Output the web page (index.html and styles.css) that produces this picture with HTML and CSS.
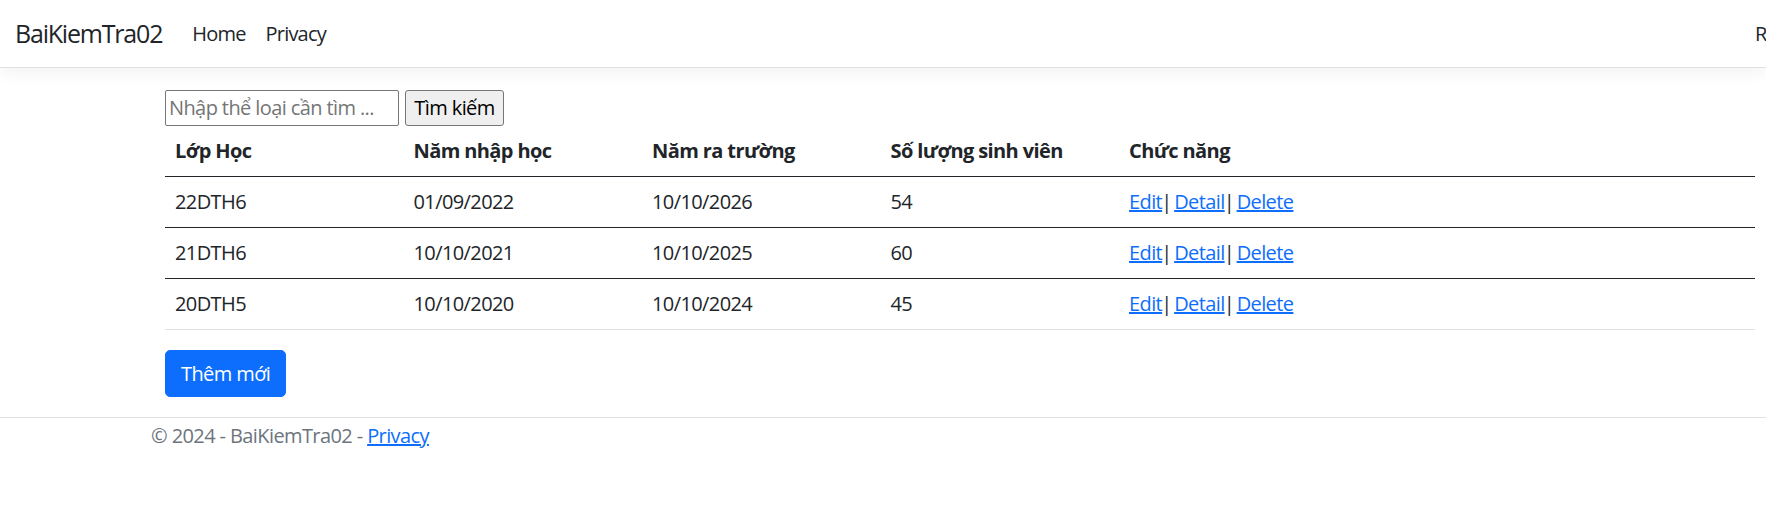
FILE: index.html
```html
<!DOCTYPE html>
<html lang="vi">
<head>
<meta charset="utf-8">
<title>BaiKiemTra02</title>
<link rel="stylesheet" href="styles.css">
</head>
<body>
<header class="navbar">
  <a class="brand" href="#">BaiKiemTra02</a>
  <ul class="nav">
    <li><a class="nav-link" href="#">Home</a></li>
    <li><a class="nav-link" href="#">Privacy</a></li>
  </ul>
  <ul class="nav nav-right">
    <li><a class="nav-link" href="#">Register</a></li>
  </ul>
</header>
<main class="main">
  <form class="search">
    <input class="search-input" type="text" placeholder="Nhập thể loại cần tìm ...">
    <button class="search-btn" type="button">Tìm kiếm</button>
  </form>
  <table class="table">
    <thead>
      <tr>
        <th class="col">Lớp Học</th>
        <th class="col">Năm nhập học</th>
        <th class="col">Năm ra trường</th>
        <th class="col">Số lượng sinh viên</th>
        <th>Chức năng</th>
      </tr>
    </thead>
    <tbody>
      <tr class="dark">
        <td>22DTH6</td><td>01/09/2022</td><td>10/10/2026</td><td>54</td>
        <td><a href="#">Edit</a><span class="sep">|</span> <a href="#">Detail</a><span class="sep">|</span> <a href="#">Delete</a></td>
      </tr>
      <tr class="dark">
        <td>21DTH6</td><td>10/10/2021</td><td>10/10/2025</td><td>60</td>
        <td><a href="#">Edit</a><span class="sep">|</span> <a href="#">Detail</a><span class="sep">|</span> <a href="#">Delete</a></td>
      </tr>
      <tr>
        <td>20DTH5</td><td>10/10/2020</td><td>10/10/2024</td><td>45</td>
        <td><a href="#">Edit</a><span class="sep">|</span> <a href="#">Detail</a><span class="sep">|</span> <a href="#">Delete</a></td>
      </tr>
    </tbody>
  </table>
  <a class="btn-primary" href="#">Thêm mới</a>
</main>
<footer class="footer">
  &copy; 2024 - BaiKiemTra02 - <a href="#">Privacy</a>
</footer>
</body>
</html>
```
FILE: styles.css
```css
html, body {
  margin: 0;
  padding: 0;
}
body {
  font-family: "Open Sans", "Noto Sans", sans-serif;
  font-size: 20px;
  line-height: 30px;
  letter-spacing: -0.6px;
  color: #212529;
  background: #fff;
  overflow: hidden;
}
a {
  color: #0d6efd;
}
.navbar {
  display: flex;
  align-items: center;
  height: 67px;
  padding-left: 15px;
  border-bottom: 1px solid #dee2e6;
  box-shadow: 0 5px 15px rgba(0, 0, 0, 0.05);
  margin-bottom: 21px;
}
.brand {
  font-size: 25px;
  line-height: 37.5px;
  letter-spacing: -1.2px;
  color: #212529;
  text-decoration: none;
  margin-right: 20px;
}
.nav {
  display: flex;
  list-style: none;
  margin: 0;
  padding: 0;
}
.nav-link {
  display: block;
  padding: 0 10px;
  color: #212529;
  letter-spacing: -0.8px;
  text-decoration: none;
}
.nav-right {
  margin-left: auto;
  width: 11px;
  overflow: hidden;
  white-space: nowrap;
}
.nav-right .nav-link {
  padding: 0;
}
.main {
  padding-left: 165px;
  padding-right: 11px;
  padding-bottom: 20px;
}
.search {
  display: flex;
  align-items: center;
  gap: 6px;
  margin: 0;
  height: 37px;
}
.search-input {
  box-sizing: border-box;
  width: 234px;
  height: 36px;
  border: 1px solid #767676;
  border-radius: 2px;
  padding: 1px 3px;
  font-family: inherit;
  font-size: 20px;
  letter-spacing: -0.6px;
  color: #212529;
}
.search-input::placeholder {
  color: #757575;
}
.search-btn {
  box-sizing: border-box;
  width: 99px;
  height: 36px;
  border: 1px solid #767676;
  border-radius: 3px;
  background: #efefef;
  font-family: inherit;
  font-size: 20px;
  letter-spacing: -0.6px;
  white-space: nowrap;
  color: #000;
  padding: 0 4px;
}
.table {
  width: 1590px;
  border-collapse: collapse;
  margin-bottom: 20px;
}
.table th, .table td {
  padding: 10px;
  text-align: left;
  vertical-align: top;
  border-bottom: 1px solid #dee2e6;
}
.table th {
  font-weight: 700;
  border-bottom-color: #212529;
}
.table .col {
  width: 218.5px;
}
.table tr.dark td {
  border-bottom-color: #212529;
}
.sep {
  margin-left: -1px;
  margin-right: -2px;
}
.btn-primary {
  display: inline-block;
  box-sizing: border-box;
  height: 47px;
  padding: 7.5px 15px;
  border: 1px solid #0d6efd;
  border-radius: 5px;
  background: #0d6efd;
  color: #fff;
  text-decoration: none;
}
.footer {
  border-top: 1px solid #dee2e6;
  padding-left: 151px;
  line-height: 36px;
  color: #6c757d;
  white-space: nowrap;
}
```
